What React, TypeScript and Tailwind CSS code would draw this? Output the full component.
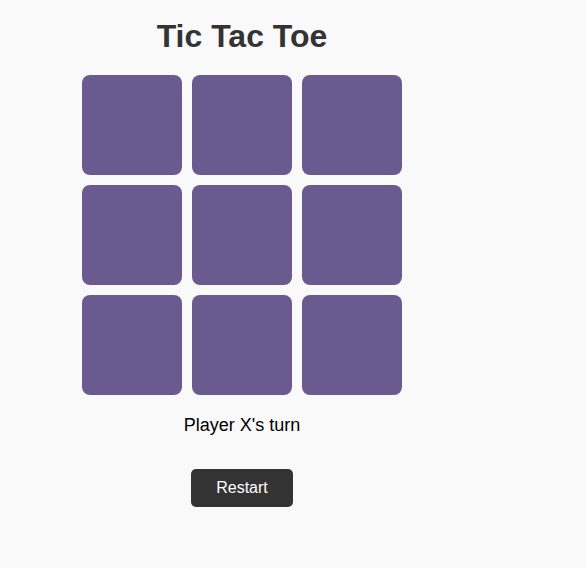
export default function App() {
  const cells = Array.from({ length: 9 });
  return (
    <div className="min-h-[568px] w-full bg-[#f9f9f9] font-['Liberation_Sans',Arial,sans-serif]">
      <div className="w-[484px] flex flex-col items-center">
        <h1 className="mt-[18px] text-[32px] leading-[37px] font-bold text-[#333333]">Tic Tac Toe</h1>
        <div className="mt-[20px] grid grid-cols-[repeat(3,100px)] gap-[10px]">
          {cells.map((_, i) => (
            <button key={i} className="w-[100px] h-[100px] rounded-[8px] bg-[#6a5a8f]" />
          ))}
        </div>
        <div className="mt-[19px] text-[18px] leading-[22px] text-black">Player X's turn</div>
        <button className="mt-[33px] w-[102px] h-[38px] rounded-[5px] bg-[#333333] text-white text-[16px]">Restart</button>
      </div>
    </div>
  );
}
